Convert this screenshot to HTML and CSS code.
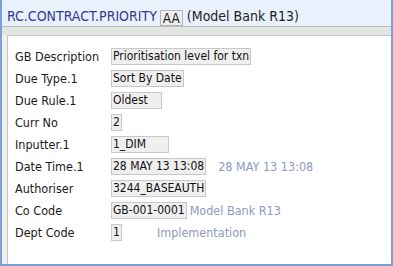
FILE: index.html
```html
<!DOCTYPE html>
<html lang="en">
<head>
    <meta charset="UTF-8">
    <meta name="viewport" content="width=device-width, initial-scale=1.0">
    <title>RC.CONTRACT.PRIORITY</title>
    <link rel="stylesheet" href="styles.css">
</head>
<body>

<div class="window">
    <div class="title-bar">
        <span class="app-name">RC.CONTRACT.PRIORITY</span>
        <span class="record-id">AA</span>
        <span class="company">(Model Bank R13)</span>
    </div>
    <div class="tab-strip"></div>

    <div class="record">
        <div class="row">
            <div class="label">GB Description</div>
            <div class="value">Prioritisation level for txn</div>
        </div>
        <div class="row">
            <div class="label">Due Type.1</div>
            <div class="value">Sort By Date</div>
        </div>
        <div class="row">
            <div class="label">Due Rule.1</div>
            <div class="value w-rule">Oldest</div>
        </div>
        <div class="row">
            <div class="label">Curr No</div>
            <div class="value">2</div>
        </div>
        <div class="row">
            <div class="label">Inputter.1</div>
            <div class="value w-input">1_DIM</div>
        </div>
        <div class="row">
            <div class="label">Date Time.1</div>
            <div class="value">28 MAY 13 13:08</div>
            <div class="enrich enrich-date">28 MAY 13 13:08</div>
        </div>
        <div class="row">
            <div class="label">Authoriser</div>
            <div class="value">3244_BASEAUTH</div>
        </div>
        <div class="row">
            <div class="label">Co Code</div>
            <div class="value">GB-001-0001</div>
            <div class="enrich">Model Bank R13</div>
        </div>
        <div class="row">
            <div class="label">Dept Code</div>
            <div class="value">1</div>
            <div class="enrich enrich-dept">Implementation</div>
        </div>
    </div>
</div>

</body>
</html>
```

FILE: styles.css
```css
body {
    margin: 0;
    font-family: 'DejaVu Sans Condensed', 'DejaVu Sans', sans-serif;
    background-color: #ffffff;
}

.window {
    width: 393px;
    height: 266px;
    box-sizing: border-box;
    border: 2px solid #7b9fd6;
    border-top: none;
    background-color: #eef0ee;
    display: flex;
    flex-direction: column;
}

.title-bar {
    height: 26px;
    background-color: #e9f1fc;
    border-bottom: 1px solid #b9bcc0;
    display: flex;
    align-items: flex-end;
    padding-left: 5px;
}

.app-name {
    font-size: 14px;
    color: #2e3b8f;
    line-height: 15px;
    margin-bottom: 2px;
}

.record-id {
    font-size: 13.5px;
    line-height: 14px;
    color: #222;
    background-color: #eeeeee;
    border: 1px solid #b4b4b4;
    padding: 0 2px;
    margin-left: 3px;
}

.company {
    font-size: 14px;
    line-height: 15px;
    color: #222;
    margin-left: 4px;
    margin-bottom: 2px;
}

.tab-strip {
    height: 8px;
    background-color: #e3e7e2;
}

.record {
    flex: 1;
    margin-left: 5px;
    background-color: #ffffff;
    border-left: 1px solid #c6c6c6;
    border-top: 1px solid #c6c6c6;
    padding: 9px 0 0 7px;
}

.row {
    display: flex;
    align-items: center;
    height: 22px;
    font-size: 12px;
    white-space: nowrap;
}

.label {
    width: 96px;
    font-size: 12.5px;
    color: #1a1a1a;
}

.value {
    background-color: #efefef;
    border: 1px solid #c8c8c8;
    padding: 0 1px;
    line-height: 15px;
    color: #111;
}

.w-rule { width: 47px; }
.w-input { width: 54px; }

.enrich {
    font-size: 12.5px;
    color: #8c9ac0;
    margin-left: 3px;
}

.enrich-date { margin-left: 12px; }
.enrich-dept { margin-left: 35px; }
```
